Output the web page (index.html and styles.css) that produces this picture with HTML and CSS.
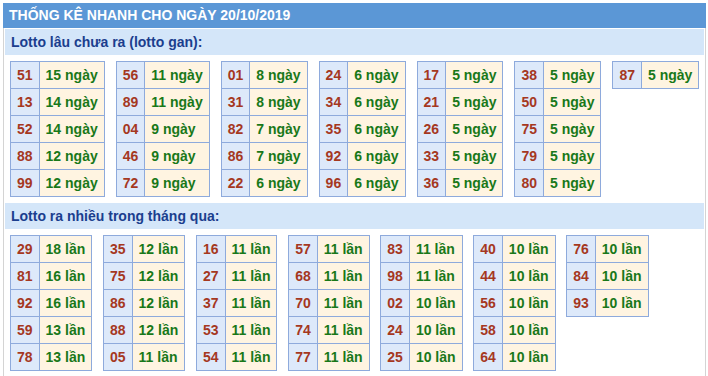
FILE: index.html
```html
<!DOCTYPE html>
<html lang="vi">
<head>
<meta charset="utf-8">
<title>Thống kê nhanh</title>
<link rel="stylesheet" href="styles.css">
</head>
<body>
<div class="wrap">
  <div class="header">THỐNG KÊ NHANH CHO NGÀY 20/10/2019</div>
  <div class="box">
    <div class="title">Lotto lâu chưa ra (lotto gan):</div>
    <div class="tables tables-gan">
      <table class="lt"><tr><td class="n">51</td><td class="v">15 ngày</td></tr><tr><td class="n">13</td><td class="v">14 ngày</td></tr><tr><td class="n">52</td><td class="v">14 ngày</td></tr><tr><td class="n">88</td><td class="v">12 ngày</td></tr><tr><td class="n">99</td><td class="v">12 ngày</td></tr></table>
      <table class="lt"><tr><td class="n">56</td><td class="v">11 ngày</td></tr><tr><td class="n">89</td><td class="v">11 ngày</td></tr><tr><td class="n">04</td><td class="v">9 ngày</td></tr><tr><td class="n">46</td><td class="v">9 ngày</td></tr><tr><td class="n">72</td><td class="v">9 ngày</td></tr></table>
      <table class="lt"><tr><td class="n">01</td><td class="v">8 ngày</td></tr><tr><td class="n">31</td><td class="v">8 ngày</td></tr><tr><td class="n">82</td><td class="v">7 ngày</td></tr><tr><td class="n">86</td><td class="v">7 ngày</td></tr><tr><td class="n">22</td><td class="v">6 ngày</td></tr></table>
      <table class="lt"><tr><td class="n">24</td><td class="v">6 ngày</td></tr><tr><td class="n">34</td><td class="v">6 ngày</td></tr><tr><td class="n">35</td><td class="v">6 ngày</td></tr><tr><td class="n">92</td><td class="v">6 ngày</td></tr><tr><td class="n">96</td><td class="v">6 ngày</td></tr></table>
      <table class="lt"><tr><td class="n">17</td><td class="v">5 ngày</td></tr><tr><td class="n">21</td><td class="v">5 ngày</td></tr><tr><td class="n">26</td><td class="v">5 ngày</td></tr><tr><td class="n">33</td><td class="v">5 ngày</td></tr><tr><td class="n">36</td><td class="v">5 ngày</td></tr></table>
      <table class="lt"><tr><td class="n">38</td><td class="v">5 ngày</td></tr><tr><td class="n">50</td><td class="v">5 ngày</td></tr><tr><td class="n">75</td><td class="v">5 ngày</td></tr><tr><td class="n">79</td><td class="v">5 ngày</td></tr><tr><td class="n">80</td><td class="v">5 ngày</td></tr></table>
      <table class="lt"><tr><td class="n">87</td><td class="v">5 ngày</td></tr></table>
    </div>
    <div class="title">Lotto ra nhiều trong tháng qua:</div>
    <div class="tables">
      <table class="lt"><tr><td class="n">29</td><td class="v">18 lần</td></tr><tr><td class="n">81</td><td class="v">16 lần</td></tr><tr><td class="n">92</td><td class="v">16 lần</td></tr><tr><td class="n">59</td><td class="v">13 lần</td></tr><tr><td class="n">78</td><td class="v">13 lần</td></tr></table>
      <table class="lt"><tr><td class="n">35</td><td class="v">12 lần</td></tr><tr><td class="n">75</td><td class="v">12 lần</td></tr><tr><td class="n">86</td><td class="v">12 lần</td></tr><tr><td class="n">88</td><td class="v">12 lần</td></tr><tr><td class="n">05</td><td class="v">11 lần</td></tr></table>
      <table class="lt"><tr><td class="n">16</td><td class="v">11 lần</td></tr><tr><td class="n">27</td><td class="v">11 lần</td></tr><tr><td class="n">37</td><td class="v">11 lần</td></tr><tr><td class="n">53</td><td class="v">11 lần</td></tr><tr><td class="n">54</td><td class="v">11 lần</td></tr></table>
      <table class="lt"><tr><td class="n">57</td><td class="v">11 lần</td></tr><tr><td class="n">68</td><td class="v">11 lần</td></tr><tr><td class="n">70</td><td class="v">11 lần</td></tr><tr><td class="n">74</td><td class="v">11 lần</td></tr><tr><td class="n">77</td><td class="v">11 lần</td></tr></table>
      <table class="lt"><tr><td class="n">83</td><td class="v">11 lần</td></tr><tr><td class="n">98</td><td class="v">11 lần</td></tr><tr><td class="n">02</td><td class="v">10 lần</td></tr><tr><td class="n">24</td><td class="v">10 lần</td></tr><tr><td class="n">25</td><td class="v">10 lần</td></tr></table>
      <table class="lt"><tr><td class="n">40</td><td class="v">10 lần</td></tr><tr><td class="n">44</td><td class="v">10 lần</td></tr><tr><td class="n">56</td><td class="v">10 lần</td></tr><tr><td class="n">58</td><td class="v">10 lần</td></tr><tr><td class="n">64</td><td class="v">10 lần</td></tr></table>
      <table class="lt"><tr><td class="n">76</td><td class="v">10 lần</td></tr><tr><td class="n">84</td><td class="v">10 lần</td></tr><tr><td class="n">93</td><td class="v">10 lần</td></tr></table>
    </div>
  </div>
</div>
</body>
</html>
```
FILE: styles.css
```css
html, body {
  margin: 0;
  padding: 0;
  background: #ffffff;
}
body {
  font-family: "Liberation Sans", Arial, sans-serif;
  font-weight: bold;
  font-size: 14px;
}
.wrap {
  margin: 3px 0 0 3px;
  width: 703px;
}
.header {
  height: 25px;
  line-height: 25px;
  background: #5b97d6;
  color: #ffffff;
  padding-left: 6px;
  white-space: nowrap;
}
.box {
  border-left: 1px solid #d4d4d4;
  border-right: 1px solid #d4d4d4;
  padding: 1px 1px 0 1px;
  min-height: 360px;
}
.title {
  height: 26px;
  line-height: 26px;
  background: #d4e6f9;
  color: #1b3e8e;
  padding-left: 6px;
}
.tables {
  display: flex;
  flex-wrap: wrap;
  align-items: flex-start;
  gap: 10.7px;
  padding: 6px 0 6px 5px;
}
.tables-gan {
  gap: 11px;
}
.lt {
  border-collapse: collapse;
  border: 1px solid #8eaadc;
}
.lt td {
  border: 1px solid #8eaadc;
  height: 26px;
  line-height: 26px;
  padding: 0 6px;
  white-space: nowrap;
}
.lt td.n {
  background: #dde9fa;
  color: #a5381f;
}
.lt td.v {
  background: #fff4e1;
  color: #197819;
}
```
